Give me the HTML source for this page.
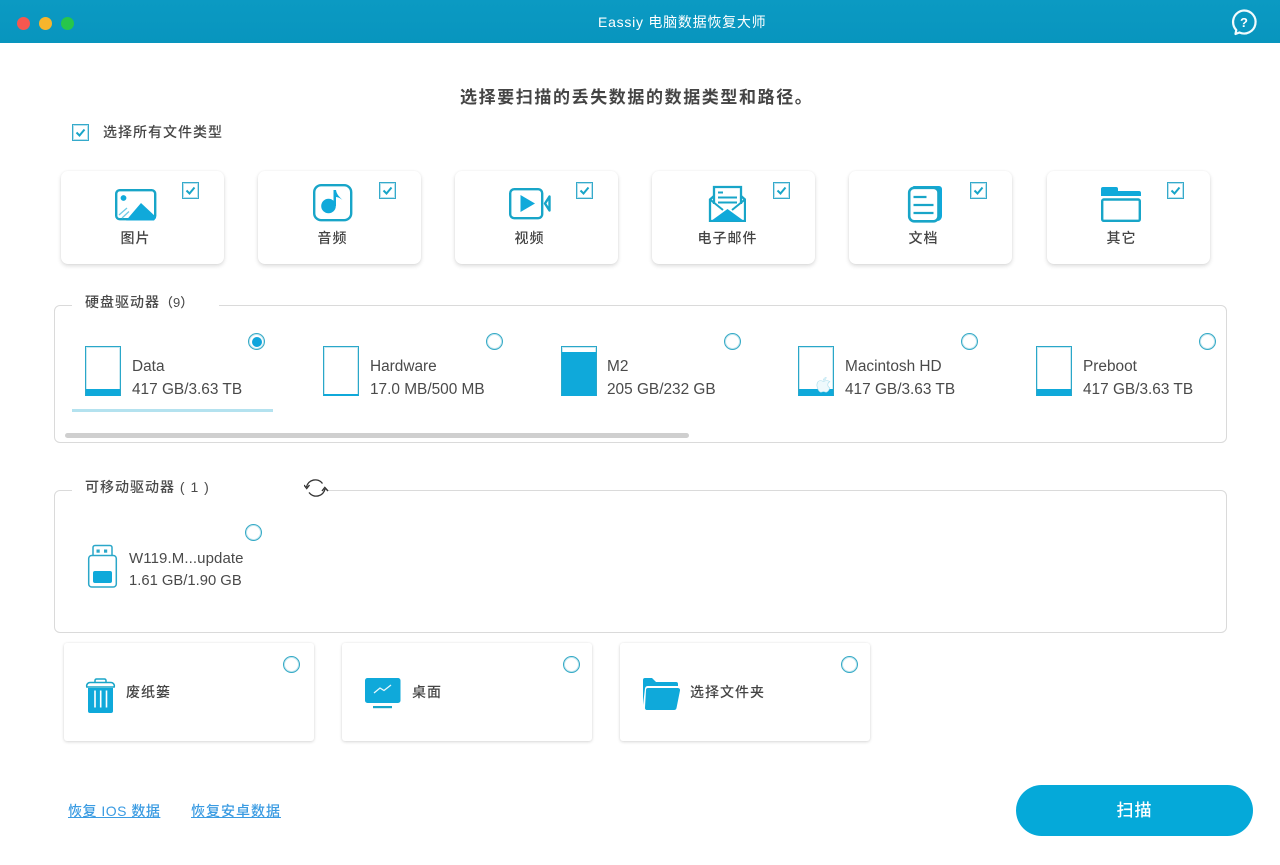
<!DOCTYPE html>
<html lang="zh"><head><meta charset="utf-8"><title>Eassiy</title>
<style>
html,body{margin:0;padding:0;background:#fff}
body{width:1280px;height:865px;position:relative;overflow:hidden;font-family:"Liberation Sans","Noto Sans CJK SC",sans-serif;color:#454545}
.a{position:absolute;white-space:nowrap}
.card{position:absolute;top:171px;width:163px;height:93px;background:#fff;border-radius:7px;box-shadow:0 2px 4px rgba(0,0,0,.14),0 0 2px rgba(0,0,0,.05)}
.cb{position:absolute;width:15px;height:15px;border:1px solid #35aacb;box-shadow:inset 0 0 0 1px rgba(53,170,203,.35);background:#fff}
.cb svg{position:absolute;left:0;top:0}
.lbl{position:absolute;left:0;top:57px;text-align:center;font-size:14px;line-height:20px;font-weight:500;letter-spacing:1px;color:#444}
.box{position:absolute;left:54px;width:1171px;border:1px solid #dadada;border-radius:6px}
.leg{position:absolute;background:#fff;font-size:14px;line-height:20px;font-weight:500;color:#4a4a4a;letter-spacing:1px}
.r{position:absolute;width:15px;height:15px;border:1px solid #35aac6;box-shadow:inset 0 0 0 1px rgba(53,170,198,.3);border-radius:50%;background:#fff}
.d{position:absolute;top:346px;width:34px;height:48px;border:1px solid #2aa7c9;border-bottom-color:#0fa9da;box-shadow:inset 0 0 0 1px rgba(42,167,201,.25);background:#fff;overflow:hidden}
.d i{position:absolute;left:0;right:0;bottom:0;background:#0fa9da;display:block}
.n{font-size:15.4px;line-height:20px;color:#4a4a4a}
.bc{position:absolute;top:643px;width:250px;height:98px;background:#fff;border-radius:3px;box-shadow:0 1px 3px rgba(0,0,0,.15),0 0 2px rgba(0,0,0,.05)}
.bl{position:absolute;top:682px;font-size:14px;line-height:20px;font-weight:500;letter-spacing:1px;color:#444}
.lnk{position:absolute;top:801px;font-size:14px;line-height:20px;font-weight:500;color:#3a9be2;text-decoration:underline;white-space:nowrap}
</style></head><body>

<div class="a" style="left:0;top:0;width:1280px;height:43px;background:linear-gradient(#0b9ac3,#0895be)"></div>
<div class="a" style="left:17px;top:17px;width:13px;height:13px;border-radius:50%;background:#f5574f"></div>
<div class="a" style="left:39px;top:17px;width:13px;height:13px;border-radius:50%;background:#f6b52d"></div>
<div class="a" style="left:61px;top:17px;width:13px;height:13px;border-radius:50%;background:#27c64b"></div>
<div class="a" style="left:598px;top:12px;font-size:14px;line-height:20px;color:#fff;letter-spacing:.75px">Eassiy 电脑数据恢复大师</div>
<svg class="a" style="left:1230px;top:8px" width="28" height="28" viewBox="0 0 28 28"><path d="M14 2.500a11.500 11.500 0 1 1-4.600 22L5.500 26l.8-4A11.500 11.500 0 0 1 14 2.500z" fill="none" stroke="#f2fbfd" stroke-width="2.200" stroke-linejoin="round"/><text x="14" y="19" text-anchor="middle" font-family="Liberation Sans" font-weight="700" font-size="13" fill="#fff">?</text></svg>

<div class="a" style="left:460px;top:87px;font-size:17px;line-height:22px;font-weight:700;color:#444;letter-spacing:1.6px">选择要扫描的丢失数据的数据类型和路径。</div>

<div class="cb" style="left:72px;top:124px"><svg width="15" height="15" viewBox="0 0 15 15"><path d="M3.500 7.500l3 3 5-6" fill="none" stroke="#18a5c8" stroke-width="2"/></svg></div>
<div class="a" style="left:103px;top:122px;font-size:14px;line-height:20px;font-weight:500;letter-spacing:1px;color:#444">选择所有文件类型</div>

<!-- type cards -->
<div class="card" style="left:61px"><div class="lbl" style="width:149px">图片</div></div>
<div class="card" style="left:258px"><div class="lbl" style="width:149px">音频</div></div>
<div class="card" style="left:455px"><div class="lbl" style="width:149px">视频</div></div>
<div class="card" style="left:652px"><div class="lbl" style="width:151px">电子邮件</div></div>
<div class="card" style="left:849px"><div class="lbl" style="width:149px">文档</div></div>
<div class="card" style="left:1047px"><div class="lbl" style="width:149px">其它</div></div>

<div class="cb" style="left:182px;top:182px"><svg width="15" height="15" viewBox="0 0 15 15"><path d="M3.500 7.500l3 3 5-6" fill="none" stroke="#18a5c8" stroke-width="2"/></svg></div>
<div class="cb" style="left:379px;top:182px"><svg width="15" height="15" viewBox="0 0 15 15"><path d="M3.500 7.500l3 3 5-6" fill="none" stroke="#18a5c8" stroke-width="2"/></svg></div>
<div class="cb" style="left:576px;top:182px"><svg width="15" height="15" viewBox="0 0 15 15"><path d="M3.500 7.500l3 3 5-6" fill="none" stroke="#18a5c8" stroke-width="2"/></svg></div>
<div class="cb" style="left:773px;top:182px"><svg width="15" height="15" viewBox="0 0 15 15"><path d="M3.500 7.500l3 3 5-6" fill="none" stroke="#18a5c8" stroke-width="2"/></svg></div>
<div class="cb" style="left:970px;top:182px"><svg width="15" height="15" viewBox="0 0 15 15"><path d="M3.500 7.500l3 3 5-6" fill="none" stroke="#18a5c8" stroke-width="2"/></svg></div>
<div class="cb" style="left:1167px;top:182px"><svg width="15" height="15" viewBox="0 0 15 15"><path d="M3.500 7.500l3 3 5-6" fill="none" stroke="#18a5c8" stroke-width="2"/></svg></div>

<!-- picture icon -->
<svg class="a" style="left:114px;top:188px" width="44" height="34" viewBox="0 0 44 34"><rect x="2.200" y="2.200" width="39" height="29" rx="3.500" fill="none" stroke="#18a5c8" stroke-width="2.400"/><circle cx="9.500" cy="10" r="2.900" fill="#10a9da"/><path d="M12 32.500L27 15l15 14v1l-2 2.500z" fill="#10a9da"/><path d="M5 27l8-7M8 30l7-6.500" stroke="#6fcbe6" stroke-width="1.300"/></svg>
<!-- audio icon -->
<svg class="a" style="left:312px;top:183px" width="42" height="40" viewBox="0 0 42 40"><rect x="2.200" y="2.200" width="37" height="35" rx="7" fill="none" stroke="#18a5c8" stroke-width="2.400"/><circle cx="16.500" cy="23" r="7.300" fill="#10a9da"/><path d="M21.500 23V7h2.500c.5 4 3 6.500 6.500 10-2.500-2-4.500-3-6.500-3V23z" fill="#10a9da"/></svg>
<!-- video icon -->
<svg class="a" style="left:508px;top:187px" width="44" height="34" viewBox="0 0 44 34"><rect x="2.200" y="2.200" width="32" height="29" rx="4" fill="none" stroke="#18a5c8" stroke-width="2.400"/><path d="M12.500 8v17l14.500-8.500z" fill="#10a9da"/><path d="M37 16.500l4.500-7v14z" fill="none" stroke="#18a5c8" stroke-width="2.400" stroke-linejoin="round"/></svg>
<!-- mail icon -->
<svg class="a" style="left:708px;top:184px" width="38" height="38" viewBox="0 0 38 38"><path d="M6 20V3h27v17" fill="#fff" stroke="#18a5c8" stroke-width="2.300"/><path d="M10 8.500h5M10 13.500h19M10 18.500h19" stroke="#18a5c8" stroke-width="2.100"/><path d="M6 12L2 15.500V37h35V15.500L33 12" fill="none" stroke="#18a5c8" stroke-width="2.300"/><path d="M2 15.500L15 26M37 15.500L24 26" stroke="#18a5c8" stroke-width="2"/><path d="M3 37l16.500-12L36 37z" fill="#10a9da"/></svg>
<!-- doc icon -->
<svg class="a" style="left:907px;top:185px" width="36" height="38" viewBox="0 0 36 38"><path d="M6 1h26a3 3 0 0 1 3 3v27a5 5 0 0 1-4 5z" fill="#10a9da"/><rect x="2.200" y="2.800" width="29.300" height="33.500" rx="5" fill="#fff" stroke="#18a5c8" stroke-width="2.600"/><path d="M6.500 12h13M6.500 20h20M6.500 28h20" stroke="#18a5c8" stroke-width="2.200"/></svg>
<!-- folder icon -->
<svg class="a" style="left:1100px;top:185px" width="42" height="38" viewBox="0 0 42 38"><path d="M1 4a2 2 0 0 1 2-2h13a2 2 0 0 1 2 2v2h21a2 2 0 0 1 2 2v3H1z" fill="#10a9da"/><rect x="2.200" y="14.500" width="37.600" height="21.300" rx="1.500" fill="none" stroke="#18a5c8" stroke-width="2.400"/></svg>

<!-- hard drives -->
<div class="box" style="top:305px;height:136px"></div>
<div class="leg" style="left:72px;top:292px;width:147px;height:20px;padding-left:13px;box-sizing:border-box">硬盘驱动器<span style="letter-spacing:0;font-size:13px">（9）</span></div>

<div class="r" style="left:248px;top:333px"></div>
<div class="a" style="left:251.500px;top:336.500px;width:10px;height:10px;background:#0fa5dc;border-radius:50%"></div>
<div class="r" style="left:486px;top:333px"></div>
<div class="r" style="left:724px;top:333px"></div>
<div class="r" style="left:961px;top:333px"></div>
<div class="r" style="left:1199px;top:333px"></div>

<div class="d" style="left:85px"><i style="height:6px"></i></div>
<div class="d" style="left:323px"><i style="height:1px"></i></div>
<div class="d" style="left:561px"><i style="height:43px"></i></div>
<div class="d" style="left:798px"><i style="height:6px"></i></div>
<svg class="a" style="left:816px;top:377px" width="15" height="16" viewBox="0 0 17 20" preserveAspectRatio="none"><path d="M12 4.500c-1.500 0-2.500.8-3.500.8S6.500 4.500 5 4.500C3 4.500 1 6.500 1 10c0 4 2.500 9 4.500 9 1.200 0 1.800-.8 3-.8s1.800.8 3 .8c1.800 0 3.500-3 4.200-5.500-3-1.300-3.200-6 0-7.500-.8-1.200-2.200-1.500-3.700-1.500z" fill="#eef9fc" stroke="#a6dcec" stroke-width=".7"/><path d="M8.500 4c0-1.800 1.300-3.300 3-3.500 0 1.800-1.300 3.300-3 3.500z" fill="#eef9fc" stroke="#a6dcec" stroke-width=".7"/></svg>
<div class="d" style="left:1036px"><i style="height:6px"></i></div>

<div class="a n" style="left:132px;top:357px">Data</div>
<div class="a n" style="left:132px;top:380px">417 GB/3.63 TB</div>
<div class="a n" style="left:370px;top:357px">Hardware</div>
<div class="a n" style="left:370px;top:380px">17.0 MB/500 MB</div>
<div class="a n" style="left:607px;top:357px">M2</div>
<div class="a n" style="left:607px;top:380px">205 GB/232 GB</div>
<div class="a n" style="left:845px;top:357px">Macintosh HD</div>
<div class="a n" style="left:845px;top:380px">417 GB/3.63 TB</div>
<div class="a n" style="left:1083px;top:357px">Preboot</div>
<div class="a n" style="left:1083px;top:380px">417 GB/3.63 TB</div>

<div class="a" style="left:72px;top:409px;width:201px;height:3px;background:#b4e2ef"></div>
<div class="a" style="left:65px;top:432.500px;width:624px;height:5px;background:#cfcfcf;border-radius:3px"></div>

<!-- removable -->
<div class="box" style="top:490px;height:141px"></div>
<div class="leg" style="left:72px;top:477px;width:256px;height:20px;padding-left:13px;box-sizing:border-box;letter-spacing:1px;word-spacing:0">可移动驱动器 ( 1 )</div>
<svg class="a" style="left:304px;top:477px" width="25" height="22" viewBox="0 0 25 22"><path d="M2.500 10a9 9 0 0 1 16-3.500M21 12a9 9 0 0 1-16 3.500" fill="none" stroke="#333" stroke-width="1.400"/><path d="M0 8l2.700 3.500L5.500 8M18 14l2.800-3.500L24 14" fill="none" stroke="#333" stroke-width="1.400"/></svg>

<div class="r" style="left:245px;top:524px"></div>
<svg class="a" style="left:87px;top:544px" width="31" height="45" viewBox="0 0 31 45"><rect x="6" y="1.500" width="19" height="12" rx="2" fill="#fff" stroke="#2aa7c9" stroke-width="1.500"/><rect x="9.500" y="5.500" width="3.200" height="3.200" fill="#2aa7c9"/><rect x="17" y="5.500" width="3.200" height="3.200" fill="#2aa7c9"/><rect x="1.700" y="11.500" width="27.600" height="31.500" rx="3" fill="#fff" stroke="#2aa7c9" stroke-width="1.500"/><rect x="6" y="27" width="19" height="12" rx="2" fill="#0fa9da"/></svg>
<div class="a n" style="left:129px;top:549px;font-size:15px;letter-spacing:.1px">W119.M...update</div>
<div class="a n" style="left:129px;top:571px;font-size:14.8px">1.61 GB/1.90 GB</div>

<!-- bottom cards -->
<div class="bc" style="left:64px"></div>
<div class="bc" style="left:342px"></div>
<div class="bc" style="left:620px"></div>
<div class="r" style="left:283px;top:656px"></div>
<div class="r" style="left:563px;top:656px"></div>
<div class="r" style="left:841px;top:656px"></div>

<svg class="a" style="left:85px;top:677px" width="31" height="37" viewBox="0 0 31 37"><path d="M10 5V3.500A1.500 1.500 0 0 1 11.500 2h8A1.500 1.500 0 0 1 21 3.500V5" fill="none" stroke="#18a5c8" stroke-width="1.500"/><path d="M1.800 10A3.500 3.500 0 0 1 5.500 5.500h20a3.500 3.500 0 0 1 3.700 4.500H1.800z" fill="#fff" stroke="#18a5c8" stroke-width="1.500"/><path d="M3 11h25v23a2 2 0 0 1-2 2H5a2 2 0 0 1-2-2z" fill="#0fa9da"/><path d="M10 13.500v17M15.700 13.500v17M21.500 13.500v17" stroke="#fff" stroke-width="1.600"/></svg>
<div class="bl" style="left:126px">废纸篓</div>

<svg class="a" style="left:364px;top:677px" width="38" height="34" viewBox="0 0 38 34"><rect x="1" y="1" width="35.500" height="25" rx="2.500" fill="#0fa9da"/><path d="M10 16l6-5 4 2.500 7-5.500" fill="none" stroke="#e8f8fc" stroke-width="1.300"/><rect x="9" y="29" width="19" height="2.200" fill="#18a5c8"/></svg>
<div class="bl" style="left:412px">桌面</div>

<svg class="a" style="left:642px;top:677px" width="40" height="34" viewBox="0 0 40 34"><path d="M1 3a2 2 0 0 1 2-2h7l4 4h20a2 2 0 0 1 2 2v2H6a3 3 0 0 0-3 2.500L1 28z" fill="#0fa9da"/><path d="M6 11h30a2 2 0 0 1 2 2.500L34.500 31a2.500 2.500 0 0 1-2.500 2H5a2 2 0 0 1-2-2.500L4 13a2 2 0 0 1 2-2z" fill="#0fa9da"/></svg>
<div class="bl" style="left:690px">选择文件夹</div>

<!-- footer -->
<div class="lnk" style="left:68px;letter-spacing:.5px">恢复 IOS 数据</div>
<div class="lnk" style="left:191px;letter-spacing:1px">恢复安卓数据</div>
<div class="a" style="left:1016px;top:785px;width:237px;height:51px;border-radius:26px;background:#05a9d9;color:#fff;font-size:17px;line-height:52px;text-align:center;letter-spacing:1px;font-weight:500">扫描</div>

</body></html>
